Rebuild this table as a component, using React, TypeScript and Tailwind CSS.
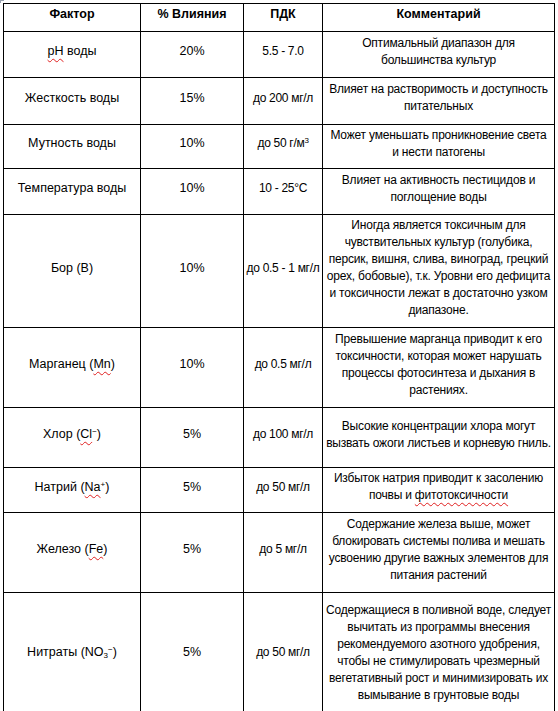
import React from 'react';

type Row = {
  factor: React.ReactNode;
  share: string;
  limit: React.ReactNode;
  note: React.ReactNode[];
  h: string;
};

// red squiggle like the spell checker in Word
const Sq = ({ children }: { children: React.ReactNode }) => (
  <span className="underline decoration-wavy decoration-[#e02020] decoration-1 underline-offset-[3px]">
    {children}
  </span>
);

const rows: Row[] = [
  {
    factor: <><Sq>pH</Sq> воды</>,
    share: '20%',
    limit: '5.5 - 7.0',
    note: ['Оптимальный диапазон для', 'большинства культур'],
    h: 'h-[46px]',
  },
  {
    factor: 'Жесткость воды',
    share: '15%',
    limit: 'до 200 мг/л',
    note: ['Влияет на растворимость и доступность', 'питательных'],
    h: 'h-[47px]',
  },
  {
    factor: 'Мутность воды',
    share: '10%',
    limit: <>до 50 г/м<sup className="text-[8px]">3</sup></>,
    note: ['Может уменьшать проникновение света', 'и нести патогены'],
    h: 'h-[44px]',
  },
  {
    factor: 'Температура воды',
    share: '10%',
    limit: '10 - 25°C',
    note: ['Влияет на активность пестицидов и', 'поглощение воды'],
    h: 'h-[46px]',
  },
  {
    factor: 'Бор (B)',
    share: '10%',
    limit: 'до 0.5 - 1 мг/л',
    note: [
      'Иногда является токсичным для',
      'чувствительных культур (голубика,',
      'персик, вишня, слива, виноград, грецкий',
      'орех, бобовые), т.к. Уровни его дефицита',
      'и токсичности лежат в достаточно узком',
      'диапазоне.',
    ],
    h: 'h-[113px]',
  },
  {
    factor: <>Марганец (<Sq>Mn</Sq>)</>,
    share: '10%',
    limit: 'до 0.5 мг/л',
    note: [
      'Превышение марганца приводит к его',
      'токсичности, которая может нарушать',
      'процессы фотосинтеза и дыхания в',
      'растениях.',
    ],
    h: 'h-[80px]',
  },
  {
    factor: <>Хлор (<Sq>Cl</Sq><sup className="text-[8px]">−</sup>)</>,
    share: '5%',
    limit: 'до 100 мг/л',
    note: ['Высокие концентрации хлора могут', 'вызвать ожоги листьев и корневую гниль.'],
    h: 'h-[60px]',
  },
  {
    factor: <>Натрий (<Sq>Na</Sq><sup className="text-[8px]">+</sup>)</>,
    share: '5%',
    limit: 'до 50 мг/л',
    note: ['Избыток натрия приводит к засолению', <>почвы и <Sq>фитотоксичности</Sq></>],
    h: 'h-[45px]',
  },
  {
    factor: <>Железо (<Sq>Fe</Sq>)</>,
    share: '5%',
    limit: 'до 5 мг/л',
    note: [
      'Содержание железа выше, может',
      'блокировать системы полива и мешать',
      'усвоению другие важных элементов для',
      'питания растений',
    ],
    h: 'h-[80px]',
  },
  {
    factor: <>Нитраты (NO<sub className="text-[8px]">3</sub><sup className="text-[8px]">−</sup>)</>,
    share: '5%',
    limit: 'до 50 мг/л',
    note: [
      'Содержащиеся в поливной воде, следует',
      'вычитать из программы внесения',
      'рекомендуемого азотного удобрения,',
      'чтобы не стимулировать чрезмерный',
      'вегетативный рост и минимизировать их',
      'вымывание в грунтовые воды',
    ],
    h: 'h-[126px]',
  },
];

const cell = 'border border-black text-center align-middle p-0 pb-[6px] whitespace-nowrap';

export default function App() {
  return (
    <div className="relative w-[558px] h-[711px] overflow-hidden bg-white text-black font-['Liberation_Sans',Arial,sans-serif] text-[12.5px] leading-[17px]">
      {/* table move handle corner */}
      <span className="absolute left-0 top-0 w-[4px] h-[3px] border-t border-l border-gray-400" />
      <table className="table-fixed border-collapse ml-[3px] mt-[3px] w-[551px]">
        <colgroup>
          <col className="w-[137px]" />
          <col className="w-[103px]" />
          <col className="w-[79px]" />
          <col className="w-[232px]" />
        </colgroup>
        <thead>
          <tr className="h-[28px] font-bold">
            <th className={cell}>Фактор</th>
            <th className={cell}>% Влияния</th>
            <th className={cell}>ПДК</th>
            <th className={cell}>Комментарий</th>
          </tr>
        </thead>
        <tbody>
          {rows.map((r, i) => (
            <tr key={i} className={r.h}>
              <td className={cell}>{r.factor}</td>
              <td className={cell}>{r.share}</td>
              <td className={`${cell} text-[12px] tracking-[-0.3px]`}>{r.limit}</td>
              <td className={`${cell} text-[12px] tracking-[-0.2px]`}>
                {r.note.map((line, j) => (
                  <div key={j}>{line}</div>
                ))}
              </td>
            </tr>
          ))}
        </tbody>
      </table>
    </div>
  );
}
